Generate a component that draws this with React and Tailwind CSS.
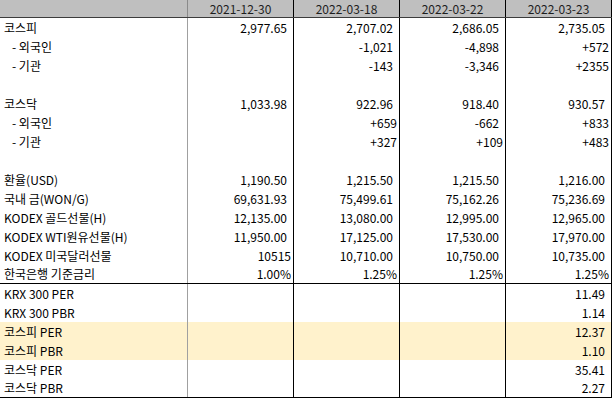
const dates = ['2021-12-30', '2022-03-18', '2022-03-22', '2022-03-23']

// [label, indent, values, highlight, thick bottom]
const rows = [
  ['코스피', false, ['2,977.65', '2,707.02', '2,686.05', '2,735.05']],
  ['- 외국인', true, ['', '-1,021', '-4,898', '+572']],
  ['- 기관', true, ['', '-143', '-3,346', '+2355']],
  ['', false, ['', '', '', '']],
  ['코스닥', false, ['1,033.98', '922.96', '918.40', '930.57']],
  ['- 외국인', true, ['', '+659', '-662', '+833']],
  ['- 기관', true, ['', '+327', '+109', '+483']],
  ['', false, ['', '', '', '']],
  ['환율(USD)', false, ['1,190.50', '1,215.50', '1,215.50', '1,216.00']],
  ['국내 금(WON/G)', false, ['69,631.93', '75,499.61', '75,162.26', '75,236.69']],
  ['KODEX 골드선물(H)', false, ['12,135.00', '13,080.00', '12,995.00', '12,965.00']],
  ['KODEX WTI원유선물(H)', false, ['11,950.00', '17,125.00', '17,530.00', '17,970.00']],
  ['KODEX 미국달러선물', false, ['10515', '10,710.00', '10,750.00', '10,735.00']],
  ['한국은행 기준금리', false, ['1.00%', '1.25%', '1.25%', '1.25%'], false, true],
  ['KRX 300 PER', false, ['', '', '', '11.49']],
  ['KRX 300 PBR', false, ['', '', '', '1.14']],
  ['코스피 PER', false, ['', '', '', '12.37'], true],
  ['코스피 PBR', false, ['', '', '', '1.10'], true],
  ['코스닥 PER', false, ['', '', '', '35.41']],
  ['코스닥 PBR', false, ['', '', '', '2.27'], false, true],
]

// general-format cells sit closer to the right edge than the number formats
const isGeneral = (v) => v.startsWith('+') || v.endsWith('%') || v === '10515'

function Row({ label, indent, values, highlight, thick }) {
  return (
    <div
      className={`flex h-[19px] ${highlight ? 'bg-[#fff2cc]' : ''} ${thick ? 'border-b border-black' : ''}`}
    >
      <div
        className={`w-[188px] shrink-0 border-r border-[#a0a0a0] flex items-center whitespace-pre ${
          indent ? 'pl-[12px]' : 'pl-[4px]'
        }`}
      >
        {label}
      </div>
      {values.map((v, i) => (
        <div
          key={i}
          className={`w-[106px] shrink-0 border-r border-black flex items-center justify-end ${
            isGeneral(v) ? 'pr-[2px]' : 'pr-[6px]'
          }`}
        >
          {v}
        </div>
      ))}
    </div>
  )
}

export default function App() {
  return (
    <div className="w-[614px] h-[398px] bg-white overflow-hidden text-[12px] leading-none text-black font-['Noto_Sans_CJK_KR','Noto_Sans',sans-serif]">
      <div className="w-[612px]">
        <div className="flex h-[18px] bg-[#bfbfbf] border-b border-[#3c3c3c] text-[#1e1e1e]">
          <div className="w-[188px] shrink-0 border-r border-[#8a8a8a]" />
          {dates.map((d) => (
            <div
              key={d}
              className="w-[106px] shrink-0 border-r border-black flex items-center justify-center"
            >
              {d}
            </div>
          ))}
        </div>
        {rows.map(([label, indent, values, highlight, thick], i) => (
          <Row
            key={i}
            label={label}
            indent={indent}
            values={values}
            highlight={highlight}
            thick={thick}
          />
        ))}
      </div>
    </div>
  )
}
